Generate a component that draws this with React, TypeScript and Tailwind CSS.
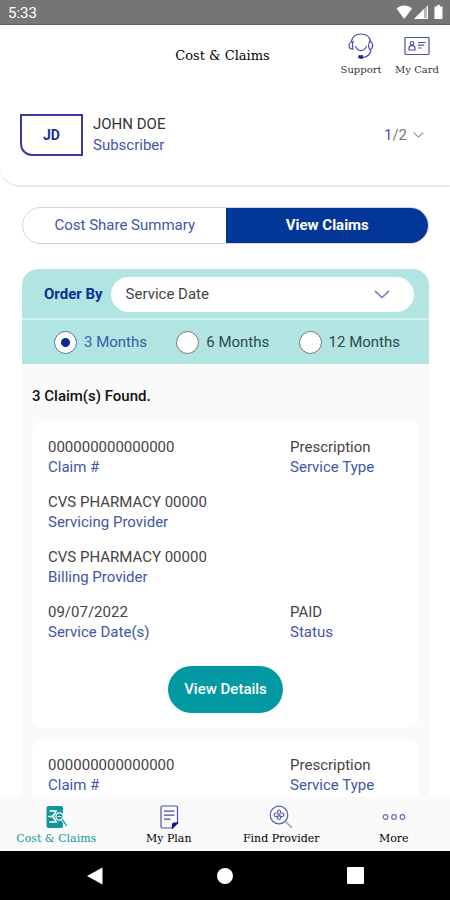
import { useState } from 'react';
import type { ReactNode } from 'react';
import clsx from 'clsx';

interface Claim {
  id: number;
  claimNumber: string;
  serviceType: string;
  servicingProvider: string;
  billingProvider: string;
  serviceDate: string;
  status: string;
}

const claims: Claim[] = [1, 2, 3].map((id) => ({
  id,
  claimNumber: '000000000000000',
  serviceType: 'Prescription',
  servicingProvider: 'CVS PHARMACY 00000',
  billingProvider: 'CVS PHARMACY 00000',
  serviceDate: '09/07/2022',
  status: 'PAID',
}));

const periods = ['3 Months', '6 Months', '12 Months'];

const SupportIcon = () => (
  <svg className="w-7 h-7" viewBox="0 0 28 28" fill="none" stroke="#4a4fa8" strokeWidth="1.2" strokeLinecap="round">
    <path d="M4.200 9.500C5.300 4.800 9.200 2 14 2s8.700 2.800 9.800 7.500" />
    <path d="M6 9.500c-2.400.5-4 2-4 4.200s1.600 3.300 4 3.300c-.8-2.500-.8-5 0-7.500z" />
    <path d="M22.800 9.200c1.900.8 2.900 2.400 2.900 4.300s-1 3.500-2.900 4.300c-1.500-2.800-1.500-5.800 0-8.600z" />
    <path d="M8.500 14.500c1.500 2.700 3.300 4.200 5.500 4.200s4-1.500 5.500-4.200" />
    <path d="M24 18.500c-1 3.800-3.800 6.300-7.500 6.800" />
    <path d="M12 23.800h3.500v2.400h-2c-1.500 0-2.300-1.200-1.500-2.400z" fill="#22279a" stroke="#22279a" />
  </svg>
);

const CardIcon = () => (
  <svg className="w-7 h-7" viewBox="0 0 28 28" fill="none" stroke="#4a4fa8" strokeWidth="1.200">
    <rect x="2" y="5.500" width="24" height="17" rx="0.800" />
    <circle cx="9" cy="11.200" r="1.700" />
    <path d="M6 18v-1.700c0-1.600 1.200-2.600 3-2.600s3 1 3 2.600v1.700z" />
    <path d="M15 10.500h7.500M15 13.200h6M15 16h3.500" />
  </svg>
);

const ClaimsIcon = () => (
  <svg className="w-6 h-6" viewBox="0 0 24 24" fill="none" strokeLinecap="round">
    <path d="M4.500 1h12.500a2 2 0 0 1 2 2v18a2 2 0 0 1-2 2h-12.500a2 2 0 0 1-2-2v-18a2 2 0 0 1 2-2z" fill="#0f979c" />
    <path d="M6 6h6.500M5 11.500h4.500M6 17h6.500M11.500 7.500l-3 4 3 4" stroke="#fff" strokeWidth="1.600" />
    <circle cx="15.500" cy="11.500" r="3.600" fill="#0f979c" stroke="#fff" strokeWidth="1.300" />
    <path d="M18.300 14.300l4 6" stroke="#fafafa" strokeWidth="3" />
    <path d="M18.300 14.300l4 6" stroke="#0f979c" strokeWidth="1.200" />
    <path d="M14 11.500h3" stroke="#fff" />
  </svg>
);

const PlanIcon = () => (
  <svg className="w-6 h-6" viewBox="0 0 24 24" fill="none" stroke="#4a4fa8" strokeWidth="1.200">
    <path d="M5.500 1h13.500a1.500 1.500 0 0 1 1.500 1.500v15l-5.500 5.500h-9.500a1.500 1.500 0 0 1-1.500-1.500v-19a1.500 1.500 0 0 1 1.500-1.500z" />
    <path d="M7 6.200h10.500M7 10.200h10.500M7 14.200h6.500" />
    <path d="M20.500 18l-5 5v-3.500a1.500 1.500 0 0 1 1.500-1.500z" fill="#14148c" stroke="#14148c" />
  </svg>
);

const ProviderIcon = () => (
  <svg className="w-6 h-6" viewBox="0 0 24 24" fill="none" stroke="#5a5eb0" strokeWidth="1.200">
    <circle cx="10" cy="10" r="8.800" />
    <path d="M16.300 16.300l6.500 6.500" strokeWidth="1.500" stroke="#9a9cc0" />
    <path d="M8.500 8v-1.500a1.500 1.500 0 0 1 3 0v1.500h1.500a1.800 1.800 0 0 1 0 3.600h-1.500v1.400a1.500 1.500 0 0 1-3 0v-1.400h-1.500a1.800 1.800 0 0 1 0-3.600z" />
    <path d="M10 8v4M8 10h4" />
  </svg>
);

const MoreIcon = () => (
  <svg className="w-6 h-6" viewBox="0 0 24 24" fill="none" stroke="#6a6eb8" strokeWidth="1.200">
    <circle cx="3.500" cy="12" r="2.300" />
    <circle cx="12" cy="12" r="2.300" />
    <circle cx="20.500" cy="12" r="2.300" />
  </svg>
);

const Chevron = ({ className }: { className: string }) => (
  <svg className={className} viewBox="0 0 18 10" fill="none" stroke="#8585bb" strokeWidth="1.800">
    <path d="M1 1l8 7.500 8-7.500" />
  </svg>
);

const StatusBar = () => (
  <div className="h-[25px] shrink-0 bg-[#757575] border-b border-[#5f5f5f] text-white flex items-center justify-between pl-2 pr-[6px]">
    <span className="text-[15px] leading-6 pt-[2px]">5:33</span>
    <svg className="w-12 h-4" viewBox="0 0 48 16" fill="#fff">
      <path d="M.5 4.500c4.500-4 11-4 15.500 0l-7.700 10.500z" />
      <path d="M32 1v14h-14z" fillOpacity="0.500" />
      <path d="M28 5v10h-10z" />
      <path d="M31.500 2v12.500h-12.500" fill="none" stroke="#fff" />
      <path d="M38.500 2.500h2.500v-1.500h3v1.500h2.500v12.500h-8z" />
    </svg>
  </div>
);

const HeaderAction = ({ icon, label }: { icon: ReactNode; label: string }) => (
  <button className="w-14 flex flex-col items-center">
    {icon}
    <span className="font-['DejaVu_Serif'] text-[10px] leading-5 text-[#333] whitespace-nowrap">{label}</span>
  </button>
);

const Header = () => (
  <header className="shrink-0 bg-white rounded-bl-[20px] shadow-[0_2px_1px_#ebebeb] pb-[29px]">
    <div className="grid grid-cols-[1fr_auto_1fr] items-center pt-[7px] pr-[5px]">
      <span />
      <h1 className="font-['DejaVu_Serif'] text-[13px] leading-5 text-black">Cost &amp; Claims</h1>
      <div className="flex justify-end">
        <HeaderAction icon={<SupportIcon />} label="Support" />
        <HeaderAction icon={<CardIcon />} label="My Card" />
      </div>
    </div>
    <div className="flex items-center pt-[34px] pl-5 pr-[26px]">
      <div className="w-[63px] h-[42px] border-2 border-[#3a3a9c] rounded-bl-xl flex items-center justify-center text-sm font-bold text-[#1c2f8f]">
        JD
      </div>
      <div className="ml-[10px] flex-1 leading-[21px]">
        <p className="text-[#333]">JOHN DOE</p>
        <p className="text-[#4256a8]">Subscriber</p>
      </div>
      <button className="flex items-center gap-[6px] text-[#777]">
        <span>
          <span className="text-[#4256a8]">1</span>/2
        </span>
        <Chevron className="w-[11px] h-[6px]" />
      </button>
    </div>
  </header>
);

const Field = ({ value, label }: { value: string; label: string }) => (
  <div className="flex flex-col-reverse">
    <dt className="text-[#4256a8]">{label}</dt>
    <dd className="text-[#444]">{value}</dd>
  </div>
);

const ClaimCard = ({ claim }: { claim: Claim }) => (
  <article className="bg-white rounded-xl px-4 pt-4 pb-[15px]">
    <div className="flex flex-col gap-[15px] leading-5">
      <dl className="grid grid-cols-[15fr_7fr]">
        <Field value={claim.claimNumber} label="Claim #" />
        <Field value={claim.serviceType} label="Service Type" />
      </dl>
      <dl className="flex flex-col gap-[15px]">
        <Field value={claim.servicingProvider} label="Servicing Provider" />
        <Field value={claim.billingProvider} label="Billing Provider" />
      </dl>
      <dl className="grid grid-cols-[15fr_7fr]">
        <Field value={claim.serviceDate} label="Service Date(s)" />
        <Field value={claim.status} label="Status" />
      </dl>
    </div>
    <button className="mt-6 mx-auto block h-[47px] px-4 rounded-full bg-[#0399a3] text-white font-medium">
      View Details
    </button>
  </article>
);

const BottomNav = () => {
  const items = [
    { label: 'Cost & Claims', icon: <ClaimsIcon /> },
    { label: 'My Plan', icon: <PlanIcon /> },
    { label: 'Find Provider', icon: <ProviderIcon /> },
    { label: 'More', icon: <MoreIcon /> },
  ];

  return (
    <nav className="shrink-0 bg-[#fafafa] grid grid-cols-4 pt-2 pb-[2px]">
      {items.map((item, i) => (
        <a
          key={item.label}
          href="#"
          className={clsx(
            "flex flex-col items-center font-['DejaVu_Serif'] text-[11px] leading-5 whitespace-nowrap",
            i === 0 ? 'text-[#0f979c]' : 'text-black'
          )}
        >
          {item.icon}
          {item.label}
        </a>
      ))}
    </nav>
  );
};

const SystemNav = () => (
  <div className="h-[49px] shrink-0 bg-black flex items-center justify-center gap-[110px]">
    <button aria-label="Back">
      <svg className="w-6 h-6" viewBox="0 0 24 24" fill="#fff">
        <path d="M19.500 3.500v17l-15.500-8.500z" />
      </svg>
    </button>
    <button aria-label="Home" className="w-4 h-4 rounded-full bg-white" />
    <button aria-label="Recent apps" className="w-6 h-6 flex items-center justify-center">
      <span className="w-[17px] h-[17px] bg-white rounded-[1px]" />
    </button>
  </div>
);

const App = () => {
  const [tab, setTab] = useState('claims');
  const [period, setPeriod] = useState('3 Months');

  return (
    <div className="h-screen flex flex-col bg-white font-[Roboto,sans-serif] text-[15px] overflow-hidden">
      <StatusBar />
      <Header />

      <main className="flex-1 min-h-0 overflow-y-auto [scrollbar-width:none] pl-[22px] pr-[21px] pt-[22px]">
        {/* Tabs */}
        <div className="flex h-[37px] rounded-full border border-[#d5d5d5] overflow-hidden">
          <button
            onClick={() => setTab('summary')}
            className={clsx('flex-1', tab === 'summary' ? 'bg-[#033797] text-white font-bold' : 'text-[#4256a8]')}
          >
            Cost Share Summary
          </button>
          <button
            onClick={() => setTab('claims')}
            className={clsx(
              'flex-1 -m-px',
              tab === 'claims' ? 'bg-[#033797] text-white font-bold' : 'text-[#4256a8]'
            )}
          >
            View Claims
          </button>
        </div>

        {/* Filters */}
        <div className="mt-[25px] rounded-t-2xl bg-[#b0e5e2]">
          <div className="flex items-center gap-2 pt-2 pb-[6px] pl-[22px] pr-[15px] border-b-2 border-[#d3f1ef]">
            <label htmlFor="order" className="font-bold text-[#0a3090]">
              Order By
            </label>
            <div className="relative flex-1">
              <select
                id="order"
                className="w-full h-[35px] pl-[15px] rounded-full bg-white text-[#444] appearance-none outline-none"
              >
                <option>Service Date</option>
              </select>
              <Chevron className="absolute right-6 top-[13px] w-4 h-[9px] pointer-events-none" />
            </div>
          </div>
          <div className="flex justify-between pl-8 pr-[29px] h-11 items-center">
            {periods.map((p) => (
              <label
                key={p}
                className={clsx('flex items-center gap-[7px]', p === period ? 'text-[#3a5cab]' : 'text-[#2f4a4c]')}
              >
                <input
                  type="radio"
                  name="period"
                  checked={p === period}
                  onChange={() => setPeriod(p)}
                  className="appearance-none w-[23px] h-[23px] rounded-full bg-white border border-[#777] checked:border-[#5a6cb0] checked:bg-[radial-gradient(circle,#0a2a90_4px,#fff_5px)]"
                />
                {p}
              </label>
            ))}
          </div>
        </div>

        {/* Claims */}
        <div className="bg-[#fafafa] px-[10px] pt-[22px]">
          <h2 className="leading-5 font-medium text-[#111]">{claims.length} Claim(s) Found.</h2>
          <div className="mt-[15px] flex flex-col gap-[11px]">
            {claims.map((claim) => (
              <ClaimCard key={claim.id} claim={claim} />
            ))}
          </div>
        </div>
      </main>

      <BottomNav />
      <SystemNav />
    </div>
  );
};

export default App;
